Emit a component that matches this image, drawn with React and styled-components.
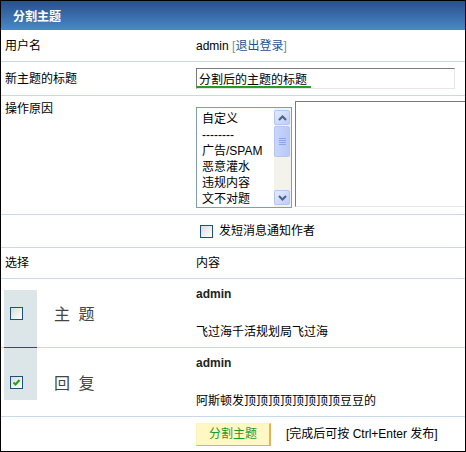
import styled, { createGlobalStyle } from "styled-components";

const GlobalStyle = createGlobalStyle`
  body {
    margin: 0;
    background: #fff;
    font-family: "Liberation Sans", "Noto Sans CJK SC", sans-serif;
    font-size: 12px;
    color: #000;
  }
`;

const Frame = styled.div`
  width: 466px;
  height: 452px;
  box-sizing: border-box;
  border: 1px solid #000;
  overflow: hidden;
`;

const Title = styled.h3`
  margin: 0;
  height: 29px;
  padding-left: 12px;
  display: flex;
  align-items: center;
  background: linear-gradient(#28508c, #4a88c6);
  color: #fff;
  font-size: 12px;
  font-weight: bold;
`;

const Row = styled.div`
  display: grid;
  grid-template-columns: 195px 1fr;
  box-sizing: border-box;
  height: ${(p) => p.$h}px;
  border-bottom: ${(p) => (p.$last ? "none" : "1px solid #c9d9e6")};
  align-items: ${(p) => (p.$top ? "start" : "center")};
`;

const Label = styled.div`
  padding-left: 4px;
  padding-top: ${(p) => p.$pt || 0}px;
  line-height: 14px;
`;

const Value = styled.div`
  display: flex;
  align-items: ${(p) => (p.$top ? "flex-start" : "center")};
  line-height: 14px;
`;

const Link = styled.a`
  color: #1e5494;
  text-decoration: none;
`;

const Bracket = styled.span`
  color: #7d8b99;
`;

const TextInput = styled.input`
  width: 259px;
  height: 21px;
  box-sizing: border-box;
  margin: 0;
  padding: 0 0 0 2px;
  border: 1px solid;
  border-color: #7b7b7b #e6e6e6 #e6e6e6 #7b7b7b;
  font: inherit;
  color: #000;
  outline: none;
  background: linear-gradient(#2a9a2a, #2a9a2a) no-repeat 0 100% / 114px 2px,
    #fff;
`;

const ListBox = styled.div`
  margin-top: 11px;
  width: 96px;
  height: 101px;
  box-sizing: border-box;
  border: 1px solid #7f9db9;
  display: flex;
  background: #fff;
`;

const Options = styled.ul`
  flex: 1;
  margin: 0;
  padding: 3px 0 0 5px;
  list-style: none;
`;

const Option = styled.li`
  height: 16px;
  line-height: 16px;
  white-space: nowrap;
`;

const ScrollBar = styled.div`
  width: 16px;
  display: flex;
  flex-direction: column;
  padding: 2px 1px 2px 0;
  background: #f3f2ec;
`;

const ScrollButton = styled.div`
  height: 15px;
  box-sizing: border-box;
  border: 1px solid #b3c6f1;
  border-radius: 2px;
  background: linear-gradient(135deg, #e3ebfd, #bccdf8);
  display: flex;
  align-items: center;
  justify-content: center;
  margin-top: ${(p) => (p.$down ? "auto" : "0")};
`;

const Thumb = styled(ScrollButton)`
  height: 31px;
  margin-top: 1px;
  background: linear-gradient(90deg, #c8d6fb, #b7c9f7);
`;

const Memo = styled.textarea`
  margin: 5px 0 0 3px;
  width: 200px;
  height: 106px;
  box-sizing: border-box;
  padding: 2px;
  border: 1px solid;
  border-color: #7b7b7b #e6e6e6 #e6e6e6 #7b7b7b;
  resize: none;
  font: inherit;
  outline: none;
`;

const Box = styled.span`
  display: inline-flex;
  align-items: center;
  justify-content: center;
  width: 13px;
  height: 13px;
  box-sizing: border-box;
  border: 1px solid #1c5180;
  background: linear-gradient(135deg, #dcdcd6, #fff);
  flex: none;
  margin-left: ${(p) => p.$ml || 0}px;
`;

const BoxText = styled.span`
  margin-left: 6px;
`;

const SelectCell = styled.div`
  position: relative;
  align-self: stretch;
  display: flex;
  align-items: center;
  padding-left: 9px;
  background: linear-gradient(#dce5e7, #dce5e7) no-repeat 3px
    ${(p) => p.$shadeTop}px / 33px ${(p) => p.$shadeH}px;

  &::after {
    content: "";
    display: ${(p) => (p.$line ? "block" : "none")};
    position: absolute;
    left: 3px;
    bottom: -1px;
    width: 33px;
    height: 1px;
    background: #244f83;
  }
`;

const Kind = styled.span`
  margin-left: 31px;
  font-size: 16px;
  letter-spacing: 2px;
  color: #444;
`;

const Post = styled.div`
  align-self: stretch;
  display: flex;
  flex-direction: column;
  justify-content: space-between;
  padding: 8px 0;
  line-height: 14px;
`;

const Author = styled.b`
  color: #222;
`;

const Submit = styled.button`
  width: 75px;
  height: 23px;
  margin: 0;
  padding: 0;
  box-sizing: border-box;
  border: 1px solid;
  border-width: 1px 2px 1px 1px;
  border-color: #fff3b3 #e6b24e #e6b24e #fff3b3;
  background: #fff8c4;
  color: #1f9a1f;
  font: inherit;
  cursor: pointer;
`;

const Hint = styled.span`
  margin-left: 15px;
`;

const reasons = ["自定义", "--------", "广告/SPAM", "恶意灌水", "违规内容", "文不对题"];

function Arrow({ down }) {
  return (
    <svg width="9" height="6" viewBox="0 0 9 6">
      <polyline
        points={down ? "1,1 4.5,4.5 8,1" : "1,5 4.5,1.5 8,5"}
        fill="none"
        stroke="#4d6185"
        strokeWidth="2"
      />
    </svg>
  );
}

function Tick() {
  return (
    <svg width="9" height="9" viewBox="0 0 9 9">
      <polyline
        points="1.5,4.5 3.5,6.5 7.5,2"
        fill="none"
        stroke="#21a121"
        strokeWidth="2"
      />
    </svg>
  );
}

function Grip() {
  return (
    <svg width="7" height="8" viewBox="0 0 7 8">
      {[1, 3, 5, 7].map((y) => (
        <line key={y} x1="0" y1={y - 0.5} x2="7" y2={y - 0.5} stroke="#8aa5e8" />
      ))}
    </svg>
  );
}

function PostRow({ kind, checked, text, shadeTop, shadeH, line, last }) {
  return (
    <Row $h={69} $last={last}>
      <SelectCell $shadeTop={shadeTop} $shadeH={shadeH} $line={line}>
        <Box>{checked && <Tick />}</Box>
        <Kind>{kind}</Kind>
      </SelectCell>
      <Post>
        <Author>admin</Author>
        <span>{text}</span>
      </Post>
    </Row>
  );
}

export default function App() {
  return (
    <>
      <GlobalStyle />
      <Frame>
        <Title>分割主题</Title>
        <Row $h={32}>
          <Label>用户名</Label>
          <Value>
            admin&nbsp;
            <Bracket>[</Bracket>
            <Link href="#">退出登录</Link>
            <Bracket>]</Bracket>
          </Value>
        </Row>
        <Row $h={34}>
          <Label>新主题的标题</Label>
          <Value>
            <TextInput defaultValue="分割后的主题的标题" />
          </Value>
        </Row>
        <Row $h={119} $top>
          <Label $pt={6}>操作原因</Label>
          <Value $top>
            <ListBox>
              <Options>
                {reasons.map((r) => (
                  <Option key={r}>{r}</Option>
                ))}
              </Options>
              <ScrollBar>
                <ScrollButton>
                  <Arrow />
                </ScrollButton>
                <Thumb>
                  <Grip />
                </Thumb>
                <ScrollButton $down>
                  <Arrow down />
                </ScrollButton>
              </ScrollBar>
            </ListBox>
            <Memo />
          </Value>
        </Row>
        <Row $h={33}>
          <span />
          <Value>
            <Box $ml={4} />
            <BoxText>发短消息通知作者</BoxText>
          </Value>
        </Row>
        <Row $h={31}>
          <Label>选择</Label>
          <Value>内容</Value>
        </Row>
        <PostRow
          kind="主 题"
          text="飞过海千活规划局飞过海"
          shadeTop={11}
          shadeH={57}
          line
        />
        <PostRow
          kind="回 复"
          checked
          text="阿斯顿发顶顶顶顶顶顶顶顶豆豆的"
          shadeTop={0}
          shadeH={52}
        />
        <Row $h={34} $last>
          <span />
          <Value>
            <Submit>分割主题</Submit>
            <Hint>[完成后可按 Ctrl+Enter 发布]</Hint>
          </Value>
        </Row>
      </Frame>
    </>
  );
}
